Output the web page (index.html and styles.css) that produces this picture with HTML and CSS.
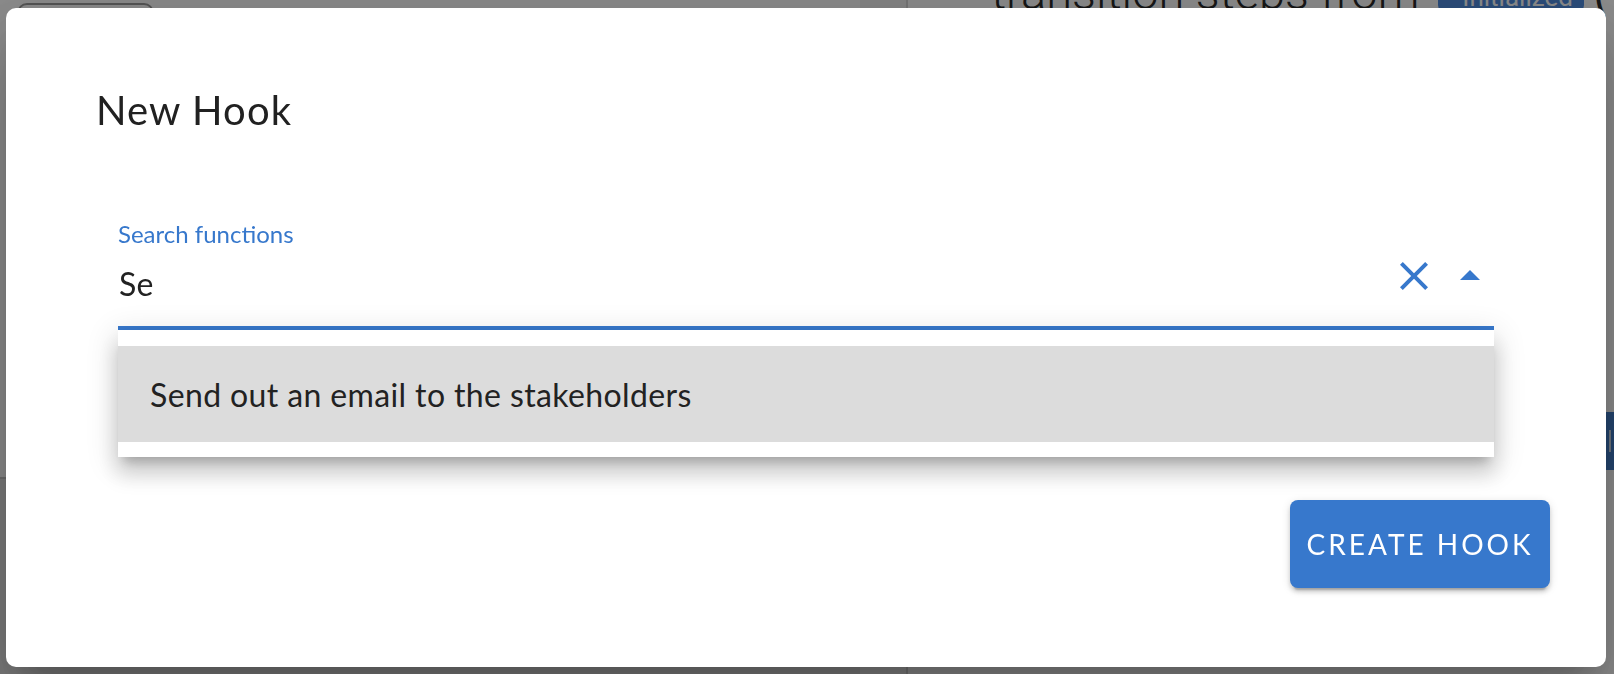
FILE: index.html
```html
<!DOCTYPE html>
<html lang="en">
<head>
<meta charset="utf-8">
<title>New Hook</title>
<link rel="stylesheet" href="styles.css">
</head>
<body>
  <div class="page">
    <div class="left-col">
      <div class="ghost-btn"></div>
      <div class="left-lower"></div>
    </div>
    <div class="divider-band"></div>
    <div class="right-col">
      <div class="heading-row">
        <h1 class="heading">transition steps from</h1>
        <span class="badge">Initialized</span>
        <span class="paren">(</span>
      </div>
      <div class="side-tab"><span class="side-tab-line"></span></div>
    </div>
  </div>

  <div class="backdrop">
    <div class="dialog" role="dialog">
      <h2 class="dialog-title">New Hook</h2>

      <div class="field">
        <label class="field-label">Search functions</label>
        <div class="field-row">
          <div class="field-input">Se</div>
          <div class="field-icons">
            <span class="icon-btn">
              <svg viewBox="0 0 24 24" width="48" height="48"><path fill="currentColor" d="M19 6.41 17.59 5 12 10.59 6.41 5 5 6.41 10.59 12 5 17.59 6.41 19 12 13.41 17.59 19 19 17.59 13.41 12z"/></svg>
            </span>
            <span class="icon-btn">
              <svg viewBox="0 0 24 24" width="48" height="48"><path fill="currentColor" d="M7 14l5-5 5 5z"/></svg>
            </span>
          </div>
        </div>

        <div class="popper">
          <div class="option">Send out an email to the stakeholders</div>
        </div>
      </div>

      <div class="actions">
        <button class="create-btn">CREATE HOOK</button>
      </div>
    </div>
  </div>
</body>
</html>
```

FILE: styles.css
```css
* { box-sizing: border-box; }

html, body {
  margin: 0;
  padding: 0;
  width: 1614px;
  height: 674px;
  overflow: hidden;
  background: #ffffff;
  font-family: "Lato", "Noto Sans", sans-serif;
}

/* ---------- page behind the backdrop ---------- */
.page {
  display: flex;
  height: 674px;
}

.left-col {
  width: 860px;
  flex-shrink: 0;
  display: flex;
  flex-direction: column;
}

.ghost-btn {
  margin: 3px 0 0 17px;
  width: 137px;
  height: 44px;
  border: 2px solid #9a9a9a;
  border-radius: 10px;
}

.left-lower {
  margin-top: 430px;
  flex: 1;
  background: #e2e2e2;
  border-top: 2px solid #c8c8c8;
}

.divider-band {
  width: 48px;
  flex-shrink: 0;
  background: #f2f2f2;
  border-right: 2px solid #d6d6d6;
}

.right-col {
  flex: 1;
  min-width: 0;
  display: flex;
  flex-direction: column;
  align-items: stretch;
}

.heading-row {
  display: flex;
  align-items: flex-start;
  margin-top: -31px;
  height: 52px;
  white-space: nowrap;
}

.heading {
  flex-shrink: 0;
  margin: 0 0 0 83px;
  font-family: "Roboto", sans-serif;
  font-weight: 300;
  font-size: 47px;
  line-height: 48px;
  color: #2a2a2a;
}

.badge {
  flex-shrink: 0;
  margin: 12px 0 0 19px;
  width: 146px;
  height: 32px;
  background: #4f8ce0;
  border-radius: 8px;
  color: #ffffff;
  font-family: "Roboto", sans-serif;
  font-size: 26px;
  line-height: 32px;
  padding-left: 24px;
}

.paren {
  flex-shrink: 0;
  margin-left: 10px;
  font-size: 48px;
  line-height: 48px;
  color: #2a2a2a;
}

.side-tab {
  align-self: flex-end;
  margin-top: 391px;
  width: 8px;
  height: 58px;
  background: #427eca;
  display: flex;
  justify-content: center;
  padding-top: 18px;
}

.side-tab-line {
  display: block;
  width: 2px;
  height: 22px;
  background: #c9d6e6;
}

/* ---------- backdrop + dialog ---------- */
.backdrop {
  position: fixed;
  inset: 0;
  background: rgba(0, 0, 0, 0.45);
}

.dialog {
  margin: 8px 0 0 6px;
  width: 1600px;
  height: 659px;
  background: #ffffff;
  border-radius: 10px;
  display: flex;
  flex-direction: column;
  padding: 78px 56px 79px 90px;
  box-shadow:
    0 22px 30px -14px rgba(0, 0, 0, 0.2),
    0 48px 76px 6px rgba(0, 0, 0, 0.14),
    0 18px 92px 16px rgba(0, 0, 0, 0.12);
}

.dialog-title {
  margin: 0;
  font-weight: 400;
  font-size: 40px;
  line-height: 48px;
  color: #212121;
  letter-spacing: 1.1px;
}

.field {
  position: relative;
  margin: 88px 56px 0 22px;
}

.field-label {
  display: block;
  font-size: 24px;
  line-height: 24px;
  color: #3778cc;
}

.field-row {
  display: flex;
  align-items: flex-start;
  margin-top: 6px;
  padding-bottom: 22px;
  border-bottom: 4px solid #3778cc;
}

.field-input {
  flex: 1;
  margin-top: 12px;
  margin-left: 1px;
  font-size: 32px;
  line-height: 40px;
  color: #222222;
  letter-spacing: 0.3px;
}

.field-icons {
  display: flex;
  gap: 8px;
  color: #3778cc;
}

.icon-btn {
  display: block;
  width: 48px;
  height: 48px;
}

.icon-btn svg { display: block; }

.popper {
  position: absolute;
  top: 100%;
  left: 0;
  right: 0;
  z-index: 2;
  background: #ffffff;
  padding: 16px 0 15px;
  box-shadow:
    0 10px 10px -6px rgba(0, 0, 0, 0.2),
    0 16px 20px 2px rgba(0, 0, 0, 0.14),
    0 6px 28px 4px rgba(0, 0, 0, 0.12);
}

.option {
  height: 96px;
  display: flex;
  align-items: center;
  padding: 0 32px;
  background: #dcdcdc;
  font-size: 32px;
  color: #222222;
  letter-spacing: 0.38px;
}

.actions {
  margin-top: auto;
  display: flex;
  justify-content: flex-end;
}

.create-btn {
  width: 260px;
  height: 88px;
  border: none;
  border-radius: 8px;
  background: #3778cc;
  color: #ffffff;
  font-family: "Lato", "Noto Sans", sans-serif;
  font-size: 28px;
  letter-spacing: 3px;
  padding: 0;
  box-shadow:
    0 6px 2px -4px rgba(0, 0, 0, 0.2),
    0 4px 4px 0 rgba(0, 0, 0, 0.14),
    0 2px 10px 0 rgba(0, 0, 0, 0.12);
}
```
